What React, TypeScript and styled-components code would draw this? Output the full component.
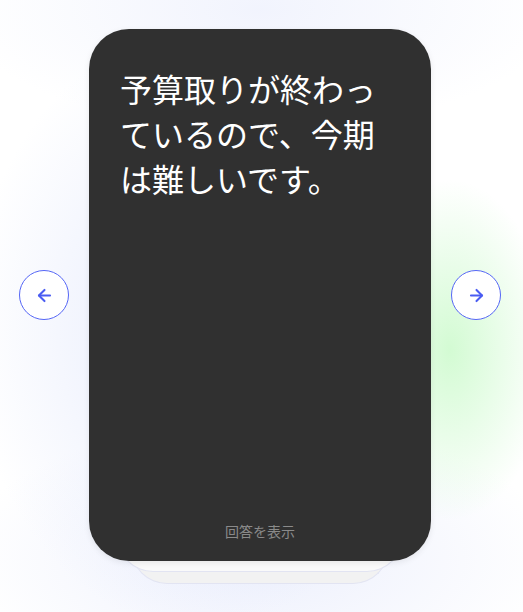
import React from 'react';
import styled, { createGlobalStyle } from 'styled-components';
import { ArrowLeft, ArrowRight } from 'lucide-react';

const GlobalStyle = createGlobalStyle`
  html, body {
    margin: 0;
    padding: 0;
    height: 100%;
  }
  body {
    font-family: "Noto Sans CJK JP", "Noto Sans", sans-serif;
    background: #ffffff;
  }
  #root {
    height: 100%;
  }
`;

const Page = styled.main`
  height: 612px;
  box-sizing: border-box;
  padding: 29px 0 0 19px;
  overflow: hidden;
  background:
    radial-gradient(ellipse 100px 170px at 450px 350px, rgba(200, 250, 200, 0.8), rgba(220, 252, 220, 0) 100%),
    radial-gradient(ellipse 230px 300px at 200px 330px, rgba(226, 232, 252, 0.9), rgba(240, 243, 254, 0) 100%),
    radial-gradient(ellipse 300px 140px at 260px 560px, rgba(232, 236, 252, 0.8), rgba(240, 243, 254, 0) 100%),
    radial-gradient(ellipse 300px 120px at 260px 10px, rgba(238, 241, 253, 0.8), rgba(255, 255, 255, 0) 100%),
    #ffffff;
`;

const Carousel = styled.div`
  display: flex;
  align-items: center;
  gap: 20px;
`;

const NavButton = styled.button`
  width: 50px;
  height: 50px;
  border-radius: 50%;
  border: 1px solid #5566f6;
  background: #ffffff;
  color: #4a5cf2;
  display: flex;
  align-items: center;
  justify-content: center;
  padding: 0;
  cursor: pointer;
  flex-shrink: 0;
`;

const Stack = styled.div`
  position: relative;
  width: 342px;
  height: 532px;
`;

const BackCard = styled.div<{ $inset: number; $drop: number; $bg: string }>`
  position: absolute;
  left: ${({ $inset }) => $inset}px;
  right: ${({ $inset }) => $inset}px;
  bottom: ${({ $drop }) => -$drop}px;
  height: 200px;
  border-radius: 0 0 36px 36px;
  background: ${({ $bg }) => $bg};
  border: 1px solid #e2e4f2;
  border-top: none;
`;

const Card = styled.div`
  position: relative;
  box-sizing: border-box;
  width: 342px;
  height: 532px;
  border-radius: 40px;
  background: #303030;
  padding: 37px 31px 20px 31px;
  display: flex;
  flex-direction: column;
  box-shadow: 0 2px 6px rgba(0, 0, 0, 0.08);
`;

const Prompt = styled.p`
  margin: 0;
  width: 272px;
  color: #ffffff;
  font-size: 32px;
  line-height: 45px;
  letter-spacing: 0;
  font-weight: 400;
`;

const Reveal = styled.button`
  margin-top: auto;
  align-self: center;
  background: none;
  border: none;
  padding: 0;
  font-family: inherit;
  font-size: 14px;
  line-height: 20px;
  color: #8a8a8a;
  cursor: pointer;
`;

export default function App() {
  return (
    <>
      <GlobalStyle />
      <Page>
        <Carousel>
          <NavButton aria-label="前へ">
            <ArrowLeft size={19} strokeWidth={2.6} />
          </NavButton>
          <Stack>
            <BackCard $inset={42} $drop={23} $bg="#f2f2f2" />
            <BackCard $inset={28} $drop={11} $bg="#fafafa" />
            <Card>
              <Prompt>予算取りが終わっているので、今期は難しいです。</Prompt>
              <Reveal>回答を表示</Reveal>
            </Card>
          </Stack>
          <NavButton aria-label="次へ">
            <ArrowRight size={19} strokeWidth={2.6} />
          </NavButton>
        </Carousel>
      </Page>
    </>
  );
}
